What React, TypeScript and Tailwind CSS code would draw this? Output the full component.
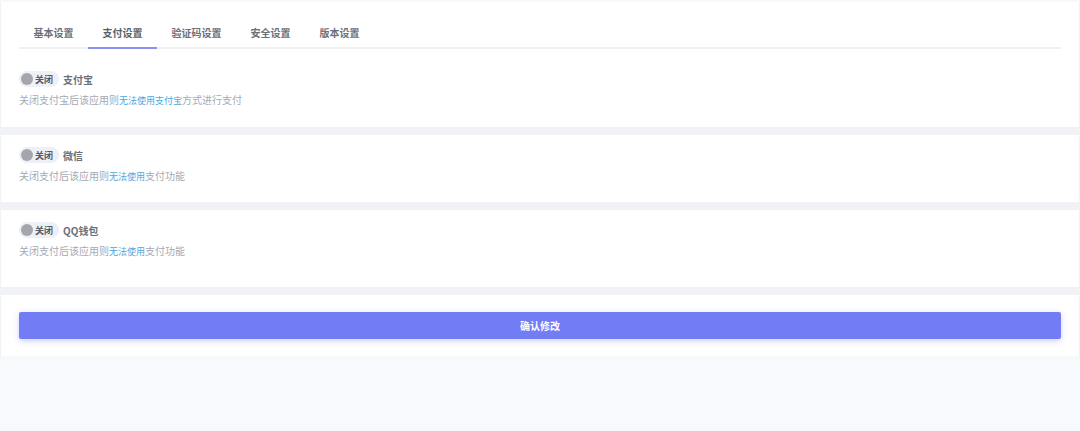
import { useState } from "react";

const TABS = ["基本设置", "支付设置", "验证码设置", "安全设置", "版本设置"];

interface PayItem {
  name: string;
  before: string;
  link: string;
  after: string;
  spacing: string;
}

const ITEMS: PayItem[] = [
  { name: "支付宝", before: "关闭支付宝后该应用则", link: "无法使用支付宝", after: "方式进行支付", spacing: "" },
  { name: "微信", before: "关闭支付后该应用则", link: "无法使用", after: "支付功能", spacing: "pb-[18px]" },
  { name: "QQ钱包", before: "关闭支付后该应用则", link: "无法使用", after: "支付功能", spacing: "pb-[28px]" },
];

function Toggle({ on, onChange }: { on: boolean; onChange: () => void }) {
  return (
    <button
      type="button"
      onClick={onChange}
      className="flex h-[16px] w-[40px] items-center gap-[2px] rounded-full bg-[#eef0f5] pl-[2px] text-[9px] font-bold leading-none text-[#555b66]"
    >
      <span className={`h-[12px] w-[12px] rounded-full ${on ? "bg-[#727cf5]" : "bg-[#a3a6ad]"}`} />
      <span>{on ? "开启" : "关闭"}</span>
    </button>
  );
}

function PayRow({ item, children }: { item: PayItem; children: React.ReactNode }) {
  return (
    <div>
      <div className="flex h-[16px] items-center gap-[4px]">
        {children}
        <span className="text-[10px] font-bold text-[#6c7079]">{item.name}</span>
      </div>
      <p className="mt-[6px] text-[10px] leading-[14px] text-[#a4a9b4]">
        {item.before}
        <span className="text-[9px] text-[#4aa8dc]">{item.link}</span>
        {item.after}
      </p>
    </div>
  );
}

export default function App() {
  const [tab, setTab] = useState(1);
  const [enabled, setEnabled] = useState([false, false, false]);

  const toggle = (i: number) => setEnabled((e) => e.map((v, j) => (j === i ? !v : v)));

  return (
    <div
      className="min-h-[431px] w-[1080px] bg-[#f8f9fc] pt-[2px]"
      style={{ fontFamily: '"Noto Sans CJK SC", "Noto Sans", sans-serif' }}
    >
      <div className="flex flex-col gap-[8px] bg-[#f1f2f5] px-[1px]">
        {/* Card 1: tabs + alipay */}
        <div className="bg-white px-[18px] pb-[19px] pt-[16px]">
          <div className="flex border-b-2 border-[#eef0f3]">
            {TABS.map((t, i) => (
              <button
                key={t}
                type="button"
                onClick={() => setTab(i)}
                className={`-mb-[2px] h-[31px] border-b-2 px-[14.5px] text-[10px] font-bold ${
                  tab === i ? "border-[#8b90f3] text-[#5a5f69]" : "border-transparent text-[#6c7079]"
                }`}
              >
                {t}
              </button>
            ))}
          </div>
          <div className="mt-[22px]">
            <PayRow item={ITEMS[0]}>
              <Toggle on={enabled[0]} onChange={() => toggle(0)} />
            </PayRow>
          </div>
        </div>

        {ITEMS.slice(1).map((item, k) => (
          <div key={item.name} className={`bg-white px-[18px] pt-[12px] ${item.spacing}`}>
            <PayRow item={item}>
              <Toggle on={enabled[k + 1]} onChange={() => toggle(k + 1)} />
            </PayRow>
          </div>
        ))}

        {/* Submit */}
        <div className="bg-white px-[18px] pb-[17px] pt-[16px]">
          <button
            type="button"
            className="h-[27px] w-full rounded-[2px] bg-[#727cf5] text-[10px] font-bold text-white shadow-[0_2px_6px_rgba(114,124,245,0.35)]"
          >
            确认修改
          </button>
        </div>
      </div>
    </div>
  );
}
